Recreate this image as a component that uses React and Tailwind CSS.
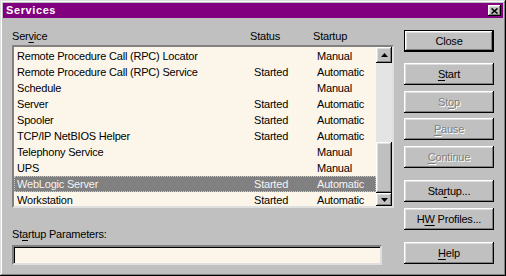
import React from "react";

const services = [
  { name: "Remote Procedure Call (RPC) Locator", status: "", startup: "Manual" },
  { name: "Remote Procedure Call (RPC) Service", status: "Started", startup: "Automatic" },
  { name: "Schedule", status: "", startup: "Manual" },
  { name: "Server", status: "Started", startup: "Automatic" },
  { name: "Spooler", status: "Started", startup: "Automatic" },
  { name: "TCP/IP NetBIOS Helper", status: "Started", startup: "Automatic" },
  { name: "Telephony Service", status: "", startup: "Manual" },
  { name: "UPS", status: "", startup: "Manual" },
  { name: "WebLogic Server", status: "Started", startup: "Automatic", selected: true },
  { name: "Workstation", status: "Started", startup: "Automatic" },
];

const raised =
  "shadow-[inset_-1px_-1px_#000,inset_1px_1px_#fff,inset_-2px_-2px_#808080,inset_2px_2px_#dfdfdf]";

// underline one letter, like a Win32 accelerator key
function Label({ text, at }) {
  if (at == null) return text;
  return (
    <>
      {text.slice(0, at)}
      <span className="underline underline-offset-[2px]">{text[at]}</span>
      {text.slice(at + 1)}
    </>
  );
}

function Button({ text, at, disabled, isDefault, className = "" }) {
  const face = (
    <div
      className={`flex h-full w-full items-center justify-center bg-[#c0c0c0] ${raised} ${
        disabled ? "text-[#808080] [text-shadow:1px_1px_0_#fff]" : "text-black"
      }`}
    >
      <span className="leading-none">
        <Label text={text} at={at} />
      </span>
    </div>
  );
  return (
    <div className={`h-[22px] w-[90px] ${isDefault ? "border border-black" : ""} ${className}`}>
      {face}
    </div>
  );
}

function Arrow({ up }) {
  return (
    <svg width="7" height="4" viewBox="0 0 7 4">
      {up ? <path d="M3.5 0 L7 4 L0 4 Z" fill="#000" /> : <path d="M0 0 L7 0 L3.5 4 Z" fill="#000" />}
    </svg>
  );
}

function ScrollBar() {
  return (
    <div className="flex h-full w-[16px] flex-col bg-[#e4e4e4]">
      <div className={`flex h-[16px] shrink-0 items-center justify-center bg-[#c0c0c0] ${raised}`}>
        <Arrow up />
      </div>
      <div className="h-[79px] shrink-0" />
      <div className={`h-[51px] shrink-0 bg-[#c0c0c0] ${raised}`} />
      <div className={`flex flex-1 items-center justify-center bg-[#c0c0c0] ${raised}`}>
        <Arrow />
      </div>
    </div>
  );
}

export default function App() {
  return (
    <div
      className="flex h-[276px] w-[506px] flex-col bg-[#c0c0c0] p-[3px] text-[11px] tracking-[-0.2px] text-black shadow-[inset_-1px_-1px_#000,inset_1px_1px_#dfdfdf,inset_-2px_-2px_#808080,inset_2px_2px_#fff]"
      style={{ fontFamily: '"Liberation Sans", Arial, sans-serif' }}
    >
      {/* title bar */}
      <div className="flex h-[15px] shrink-0 items-center justify-between bg-[#800080] pl-[3px] pr-[2px]">
        <span className="text-[11px] font-bold leading-none tracking-[0.6px] text-white">Services</span>
        <div className={`flex h-[11px] w-[13px] items-center justify-center bg-[#c0c0c0] ${raised}`}>
          <svg width="7" height="6" viewBox="0 0 7 6">
            <path d="M0.5 0.5 L6.5 5.5 M6.5 0.5 L0.5 5.5" stroke="#000" strokeWidth="1.6" />
          </svg>
        </div>
      </div>

      <div className="flex flex-1 pl-[9px] pt-[12px]">
        {/* left side */}
        <div className="flex w-[382px] flex-col">
          <div className="relative h-[15px] leading-[13px]">
            <span>
              <Label text="Service" at={3} />
            </span>
            <span className="absolute left-[238px] top-0">Status</span>
            <span className="absolute left-[301px] top-0">Startup</span>
          </div>

          <div className="flex h-[163px] border-2 border-b-[#dfdfdf] border-l-[#808080] border-r-[#dfdfdf] border-t-[#808080] shadow-[inset_1px_1px_#000]">
            <div className="flex-1 overflow-hidden bg-[#fcf6ea] pt-[1px]">
              {services.map((s) => (
                <div
                  key={s.name}
                  className={`grid h-[16px] grid-cols-[237px_63px_1fr] items-center pl-[3px] leading-none ${
                    s.selected
                      ? "bg-[#808080] text-[#f4f4f4] outline outline-1 -outline-offset-1 outline-dotted outline-[#c8c8c8]"
                      : ""
                  }`}
                >
                  <span>{s.name}</span>
                  <span>{s.status}</span>
                  <span>{s.startup}</span>
                </div>
              ))}
            </div>
            <ScrollBar />
          </div>

          <div className="mt-[20px] leading-[13px]">
            <Label text="Startup Parameters:" at={2} />
          </div>
          <div className="mt-[4px] h-[20px] w-[370px] border-2 border-b-[#dfdfdf] border-l-[#808080] border-r-[#dfdfdf] border-t-[#808080] bg-[#fcf6ea] shadow-[inset_1px_1px_#000]" />
        </div>

        {/* buttons */}
        <div className="ml-[10px] flex flex-col">
          <Button text="Close" isDefault />
          <Button text="Start" at={0} className="mt-[11px]" />
          <Button text="Stop" at={2} disabled className="mt-[6px]" />
          <Button text="Pause" at={0} disabled className="mt-[5px]" />
          <Button text="Continue" at={0} disabled className="mt-[6px]" />
          <Button text="Startup..." at={3} className="mt-[12px]" />
          <Button text="HW Profiles..." at={1} className="mt-[6px]" />
          <Button text="Help" at={0} className="mt-[12px]" />
        </div>
      </div>
    </div>
  );
}
